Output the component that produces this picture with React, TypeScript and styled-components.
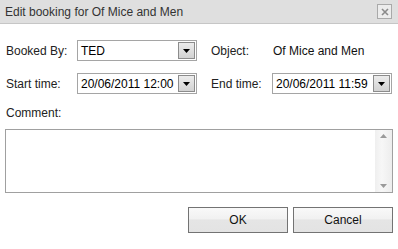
import React, { FC } from "react";
import styled, { createGlobalStyle } from "styled-components";

const GlobalStyle = createGlobalStyle`
  html, body {
    margin: 0;
    padding: 0;
    background: #ffffff;
  }
  body {
    font-family: "Liberation Sans", Arial, sans-serif;
    font-size: 12px;
    color: #222;
  }
`;

const Dialog = styled.div`
  width: 398px;
  height: 249px;
  background: #fff;
  display: flex;
  flex-direction: column;
`;

const TitleBar = styled.div`
  height: 23px;
  background: #dfdfdf;
  border-bottom: 1px solid #c6c6c6;
  display: flex;
  align-items: center;
  justify-content: space-between;
  padding: 0 6px 0 5px;
`;

const Title = styled.span`
  color: #333;
  font-size: 12px;
`;

const CloseButton = styled.div`
  width: 13px;
  height: 13px;
  border: 1px solid #a9a9a9;
  background: #ececec;
  display: flex;
  align-items: center;
  justify-content: center;
`;

const Body = styled.div`
  padding: 16px 5px 0 5px;
  display: flex;
  flex-direction: column;
`;

const FormGrid = styled.div`
  display: grid;
  grid-template-columns: 71px 120px 75px 120px;
  row-gap: 12px;
  padding-left: 1px;
`;

const Label = styled.span<{ $indent?: boolean }>`
  height: 21px;
  display: flex;
  align-items: center;
  padding-left: ${(p) => (p.$indent ? 14 : 0)}px;
  white-space: nowrap;
  color: #222;
`;

const Value = styled.span`
  height: 21px;
  display: flex;
  align-items: center;
  padding-left: 1px;
  white-space: nowrap;
  color: #111;
`;

const SelectBox = styled.div`
  width: 120px;
  height: 21px;
  box-sizing: border-box;
  border: 1px solid #a5a5a5;
  display: flex;
  align-items: stretch;
  background: #fff;
`;

const SelectText = styled.span`
  flex: 1;
  display: flex;
  align-items: center;
  padding-left: 3px;
  color: #000;
  white-space: nowrap;
  overflow: hidden;
`;

const ArrowButton = styled.span`
  width: 17px;
  box-sizing: border-box;
  margin: 1px 1px 1px 0;
  border: 1px solid #8c8c8c;
  background: linear-gradient(#ececec, #d2d2d2);
  display: flex;
  align-items: center;
  justify-content: center;
`;

const CommentLabel = styled.div`
  margin-top: 12px;
  padding-left: 1px;
  height: 14px;
  line-height: 14px;
  color: #222;
`;

const CommentBox = styled.div`
  margin-top: 9px;
  height: 64px;
  box-sizing: border-box;
  border: 1px solid #a0a0a0;
  display: flex;
  justify-content: flex-end;
  width: 388px;
`;

const ScrollBar = styled.div`
  width: 17px;
  background: linear-gradient(90deg, #efefef, #f7f7f7 40%, #ededed);
  display: flex;
  flex-direction: column;
  justify-content: space-between;
  align-items: center;
  padding: 4px 0 4px 0;
`;

const Footer = styled.div`
  display: flex;
  justify-content: flex-end;
  gap: 5px;
  padding: 14px 5px 0 0;
`;

const Button = styled.button`
  width: 100px;
  height: 26px;
  box-sizing: border-box;
  border: 1px solid #737373;
  background: linear-gradient(#f9f9f9 0%, #f1f1f1 45%, #e5e5e5 50%, #e3e3e3 100%);
  font-family: "Liberation Sans", Arial, sans-serif;
  font-size: 12px;
  color: #111;
  padding: 0;
`;

const DownArrow: FC = () => (
  <svg width="7" height="4" viewBox="0 0 7 4">
    <path d="M0 0 H7 L3.5 4 Z" fill="#000" />
  </svg>
);

const Select: FC<{ value: string }> = ({ value }) => (
  <SelectBox>
    <SelectText>{value}</SelectText>
    <ArrowButton>
      <DownArrow />
    </ArrowButton>
  </SelectBox>
);

export default function App() {
  return (
    <>
      <GlobalStyle />
      <Dialog>
        <TitleBar>
          <Title>Edit booking for Of Mice and Men</Title>
          <CloseButton>
            <svg width="8" height="8" viewBox="0 0 8 8">
              <path d="M1 1 L7 7 M7 1 L1 7" stroke="#8a8a8a" strokeWidth="1.6" />
            </svg>
          </CloseButton>
        </TitleBar>
        <Body>
          <FormGrid>
            <Label>Booked By:</Label>
            <Select value="TED" />
            <Label $indent>Object:</Label>
            <Value>Of Mice and Men</Value>
            <Label>Start time:</Label>
            <Select value="20/06/2011 12:00" />
            <Label $indent>End time:</Label>
            <Select value="20/06/2011 11:59" />
          </FormGrid>
          <CommentLabel>Comment:</CommentLabel>
          <CommentBox>
            <ScrollBar>
              <svg width="7" height="4" viewBox="0 0 7 4">
                <path d="M0 4 H7 L3.5 0 Z" fill="#9a9a9a" />
              </svg>
              <svg width="7" height="4" viewBox="0 0 7 4">
                <path d="M0 0 H7 L3.5 4 Z" fill="#9a9a9a" />
              </svg>
            </ScrollBar>
          </CommentBox>
        </Body>
        <Footer>
          <Button>OK</Button>
          <Button>Cancel</Button>
        </Footer>
      </Dialog>
    </>
  );
}
